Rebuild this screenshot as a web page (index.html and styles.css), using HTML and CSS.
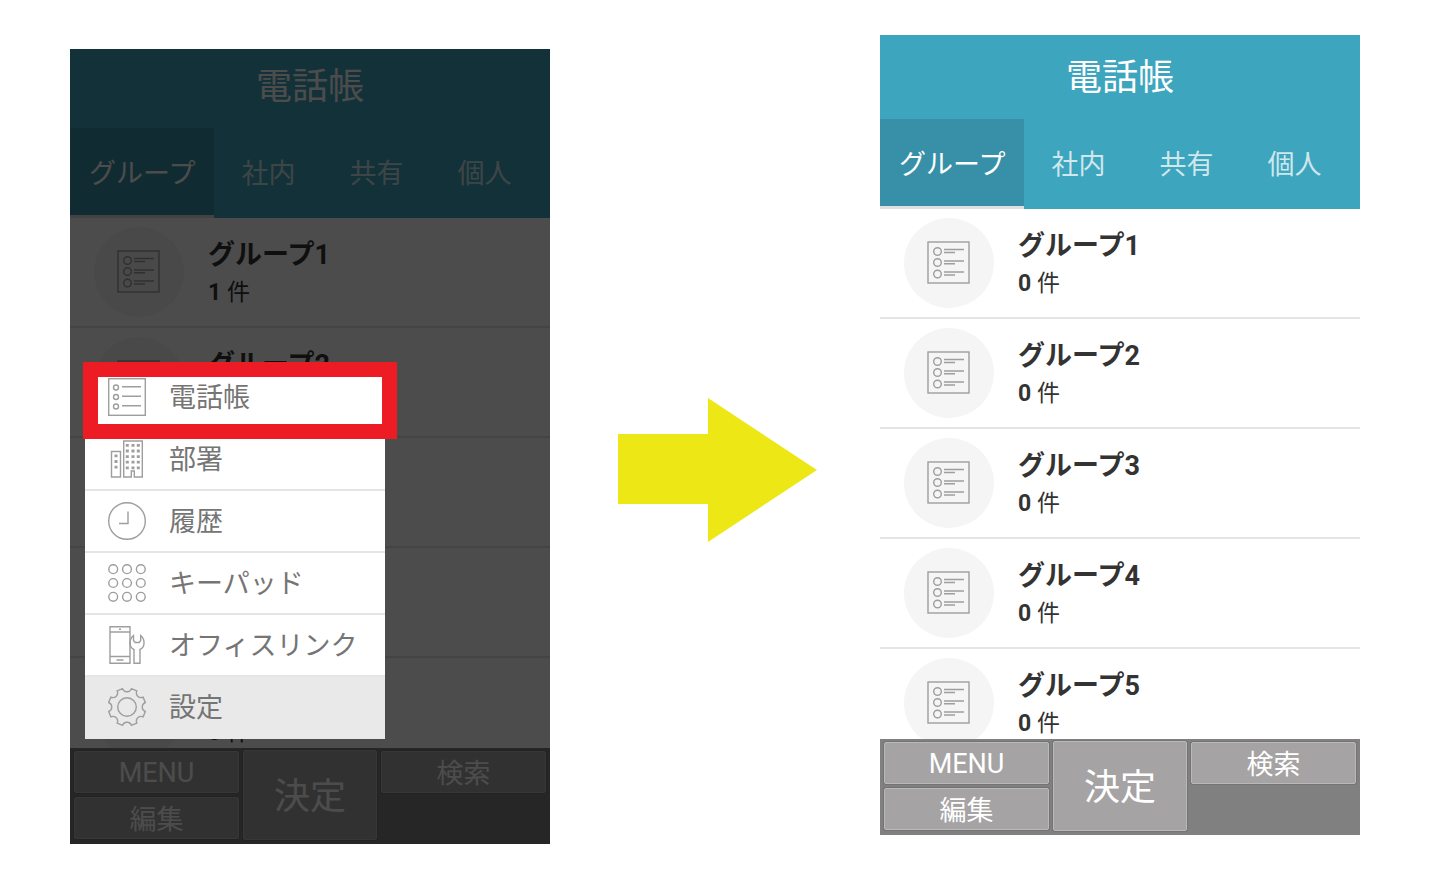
FILE: index.html
```html
<!DOCTYPE html>
<html lang="ja">
<head>
  <meta charset="UTF-8">
  <meta name="viewport" content="width=device-width, initial-scale=1.0">
  <title>電話帳</title>
  <link rel="stylesheet" href="styles.css">
</head>
<body>
  <!-- アイコン定義 -->
  <svg class="icon-defs" aria-hidden="true">
    <symbol id="icon-group" viewBox="0 0 44 44">
      <rect x="1" y="1" width="41" height="41"/>
      <circle cx="10.500" cy="10.500" r="3.800"/>
      <circle cx="10.500" cy="21.500" r="3.800"/>
      <circle cx="10.500" cy="33" r="3.800"/>
      <path d="M17 8.500h20M17 11.500h11M17 20h20M17 22.700h11M17 31h20M17 34h11"/>
    </symbol>
    <symbol id="icon-book" viewBox="0 0 38 38">
      <rect x=".7" y=".7" width="36.6" height="36.6"/>
      <circle cx="8" cy="9.5" r="2.5"/>
      <circle cx="8" cy="19" r="2.5"/>
      <circle cx="8" cy="28.5" r="2.5"/>
      <path d="M14 8.7h19M14 18.2h19M14 27.7h19"/>
    </symbol>
    <symbol id="icon-building" viewBox="0 0 38 38">
      <path d="M3.5 11.5h9v25.5h-9zM15.7 1h18.600v36h-8v-6h-3v6h-7.600z"/>
      <path class="windows" d="M8 14.500v14.500M19.300 4v25.500M25 4v25.500M30.300 4v25.500"/>
    </symbol>
    <symbol id="icon-clock" viewBox="0 0 38 38">
      <circle cx="19" cy="19" r="18.300"/>
      <path d="M20 9.500v12h-9"/>
    </symbol>
    <symbol id="icon-keypad" viewBox="0 0 38 38">
      <circle cx="5.200" cy="5.200" r="4.400"/>
      <circle cx="19" cy="5.200" r="4.400"/>
      <circle cx="32.800" cy="5.200" r="4.400"/>
      <circle cx="5.200" cy="19" r="4.400"/>
      <circle cx="19" cy="19" r="4.400"/>
      <circle cx="32.800" cy="19" r="4.400"/>
      <circle cx="5.200" cy="32.800" r="4.400"/>
      <circle cx="19" cy="32.800" r="4.400"/>
      <circle cx="32.800" cy="32.800" r="4.400"/>
    </symbol>
    <symbol id="icon-office" viewBox="0 0 38 38">
      <path d="M2 .8h20v36.400H2zM2 6h20M2 30.500h20M8.500 34h7M11 3.300h2"/>
      <path d="M26 37.200V23.500C21 21.500 20.500 13.500 25.500 9.500V14.500l1.600 2h4l1.600-2V9.500C37.500 13.500 37 21.500 32 23.500V37.200z"/>
    </symbol>
    <symbol id="icon-gear" viewBox="-19 -19 38 38">
      <circle r="9.300"/>
      <path d="M-4.500-18.300C-3-15-1.500-15.300 0-15.300S3-15 4.500-18.300L9.800-16.100C8.500-12.700 9.800-11.800 10.800-10.800S12.700-8.500 16.100-9.800L18.300-4.500C15-3 15.300-1.500 15.300 0S15 3 18.300 4.500L16.100 9.800C12.700 8.500 11.800 9.800 10.800 10.800S8.500 12.700 9.800 16.100L4.500 18.300C3 15 1.500 15.300 0 15.300S-3 15-4.500 18.300L-9.800 16.100C-8.500 12.700-9.800 11.800-10.800 10.800S-12.700 8.500-16.100 9.800L-18.300 4.500C-15 3-15.300 1.500-15.300 0S-15-3-18.300-4.500L-16.100-9.800C-12.700-8.500-11.800-9.800-10.800-10.800S-8.500-12.700-9.800-16.100Z"/>
    </symbol>
  </svg>

  <main class="guide">
    <!-- メニューを開いた画面 -->
    <section class="phone phone-before">
      <header class="phone-header"><h1>電話帳</h1></header>
      <nav class="tabs">
        <button class="tab active">グループ</button>
        <button class="tab">社内</button>
        <button class="tab">共有</button>
        <button class="tab">個人</button>
      </nav>
      <ul class="group-list">
        <li class="group">
          <span class="avatar"><svg><use href="#icon-group"/></svg></span>
          <div class="group-text"><h2>グループ1</h2><p><b>1</b> 件</p></div>
        </li>
        <li class="group">
          <span class="avatar"><svg><use href="#icon-group"/></svg></span>
          <div class="group-text"><h2>グループ2</h2><p class="covered"><b>0</b> 件</p></div>
        </li>
        <li class="group">
          <span class="avatar"><svg><use href="#icon-group"/></svg></span>
          <div class="group-text covered"><h2>グループ3</h2><p><b>0</b> 件</p></div>
        </li>
        <li class="group">
          <span class="avatar"><svg><use href="#icon-group"/></svg></span>
          <div class="group-text covered"><h2>グループ4</h2><p><b>0</b> 件</p></div>
        </li>
        <li class="group">
          <span class="avatar"><svg><use href="#icon-group"/></svg></span>
          <div class="group-text"><h2 class="covered">グループ5</h2><p><b>0</b> 件</p></div>
        </li>
      </ul>
      <footer class="keys">
        <button class="key key-menu">MENU</button>
        <button class="key key-enter">決定</button>
        <button class="key">検索</button>
        <button class="key">編集</button>
      </footer>

      <div class="dim"></div>
      <nav class="menu">
        <button class="menu-item"><svg><use href="#icon-book"/></svg><span>電話帳</span></button>
        <button class="menu-item"><svg><use href="#icon-building"/></svg><span>部署</span></button>
        <button class="menu-item"><svg><use href="#icon-clock"/></svg><span>履歴</span></button>
        <button class="menu-item"><svg><use href="#icon-keypad"/></svg><span>キーパッド</span></button>
        <button class="menu-item"><svg><use href="#icon-office"/></svg><span>オフィスリンク</span></button>
        <button class="menu-item selected"><svg><use href="#icon-gear"/></svg><span>設定</span></button>
      </nav>
      <div class="highlight"></div>
    </section>

    <div class="arrow">
      <svg viewBox="0 0 199 144"><path d="M0 36h90V0l109 72-109 72v-38H0z"/></svg>
    </div>

    <!-- 電話帳画面 -->
    <section class="phone">
      <header class="phone-header"><h1>電話帳</h1></header>
      <nav class="tabs">
        <button class="tab active">グループ</button>
        <button class="tab">社内</button>
        <button class="tab">共有</button>
        <button class="tab">個人</button>
      </nav>
      <ul class="group-list">
        <li class="group">
          <span class="avatar"><svg><use href="#icon-group"/></svg></span>
          <div class="group-text"><h2>グループ1</h2><p><b>0</b> 件</p></div>
        </li>
        <li class="group">
          <span class="avatar"><svg><use href="#icon-group"/></svg></span>
          <div class="group-text"><h2>グループ2</h2><p><b>0</b> 件</p></div>
        </li>
        <li class="group">
          <span class="avatar"><svg><use href="#icon-group"/></svg></span>
          <div class="group-text"><h2>グループ3</h2><p><b>0</b> 件</p></div>
        </li>
        <li class="group">
          <span class="avatar"><svg><use href="#icon-group"/></svg></span>
          <div class="group-text"><h2>グループ4</h2><p><b>0</b> 件</p></div>
        </li>
        <li class="group">
          <span class="avatar"><svg><use href="#icon-group"/></svg></span>
          <div class="group-text"><h2>グループ5</h2><p><b>0</b> 件</p></div>
        </li>
      </ul>
      <footer class="keys">
        <button class="key key-menu">MENU</button>
        <button class="key key-enter">決定</button>
        <button class="key">検索</button>
        <button class="key">編集</button>
      </footer>
    </section>
  </main>
</body>
</html>
```

FILE: styles.css
```css
* {
  margin: 0;
  padding: 0;
  box-sizing: border-box;
}
body {
  font-family: Roboto, "Noto Sans CJK JP", sans-serif;
  background: #fff;
  color: #333;
}
button {
  font: inherit;
  border: none;
  cursor: pointer;
}
.icon-defs {
  position: absolute;
  width: 0;
  height: 0;
}
/* 2つの画面と矢印 */
.guide {
  display: grid;
  grid-template-columns: 16fr 11fr 16fr;
  align-items: start;
  padding: 35px 71px 28px 70px;
}
.phone {
  position: relative;
}
.phone-before {
  margin-top: 14px;
}
.phone-header {
  height: 84px;
  display: flex;
  align-items: flex-end;
  justify-content: center;
  background: #3ea5be;
  color: #fff;
}
.phone-before .phone-header {
  height: 79px;
}
.phone-header h1 {
  font-size: 36px;
  font-weight: 400;
  line-height: 82px;
}
/* タブ */
.tabs {
  display: flex;
  background: #3ea5be;
}
.tab {
  min-width: 108px;
  height: 90px;
  padding: 0 19px 4px;
  background: none;
  color: rgba(255, 255, 255, 0.75);
  font-size: 27px;
}
.tab.active {
  background: #3790a8;
  color: #fff;
  box-shadow: inset 0 -3px #dfdfdf;
}
/* グループ一覧 */
.group-list {
  height: 530px;
  overflow: hidden;
  list-style: none;
  background: #fff;
}
.group {
  display: flex;
  align-items: center;
  gap: 24px;
  height: 110px;
  padding: 0 24px;
  border-bottom: 2px solid #e5e5e5;
}
.avatar {
  display: flex;
  align-items: center;
  justify-content: center;
  width: 90px;
  height: 90px;
  border-radius: 50%;
  background: #f5f5f5;
}
.avatar svg {
  width: 44px;
  height: 44px;
  fill: none;
  stroke: #9e9e9e;
  stroke-width: 1.4;
}
.group-text {
  padding-top: 3px;
}
.group-text h2 {
  font-size: 27px;
  font-weight: 700;
  line-height: 38px;
}
.group-text p {
  font-size: 23px;
  line-height: 38px;
}
/* メニューの下に隠れる文字 */
.covered {
  visibility: hidden;
}
/* 下部キー */
.keys {
  display: grid;
  grid-template-columns: 165fr 134fr 165fr;
  grid-template-rows: 44px 44px;
  gap: 2px 4px;
  padding: 2px 4px 4px;
  background: #808080;
}
.key {
  margin: 1px 0;
  padding-bottom: 4px;
  border: 1px solid #b9b9b9;
  border-radius: 2px;
  box-shadow: 0 0 0 1px #747474;
  background: #a5a3a4;
  color: #fff;
  font-size: 27px;
}
.key-menu {
  padding: 2px 0 0;
}
.key-enter {
  grid-row: span 2;
  margin: 0;
  font-size: 36px;
}
/* メニュー */
.dim {
  position: absolute;
  inset: 0;
  background: rgba(0, 0, 0, 0.7);
}
.menu {
  position: absolute;
  top: 318px;
  left: 15px;
  width: 300px;
}
.menu-item {
  display: flex;
  align-items: center;
  gap: 23px;
  width: 100%;
  height: 62px;
  padding: 0 23px;
  border-bottom: 2px solid #e5e5e5;
  background: #fff;
  color: #757575;
  font-size: 27px;
}
.menu-item.selected {
  background: #e9e9e9;
  border-color: #e9e9e9;
}
.menu-item span {
  padding-bottom: 4px;
}
.menu-item svg {
  flex: none;
  width: 38px;
  height: 38px;
  fill: none;
  stroke: #9e9e9e;
  stroke-width: 1.4;
}
.windows {
  stroke-width: 3;
  stroke-dasharray: 2.800 2.800;
}
/* 赤枠 */
.highlight {
  position: absolute;
  top: 313px;
  left: 13px;
  width: 314px;
  height: 77px;
  border: 15px solid #ed1c24;
  pointer-events: none;
}
.arrow {
  align-self: center;
  justify-self: center;
  padding: 61px 0 0 5px;
}
.arrow svg {
  display: block;
  width: 199px;
  fill: #ede815;
}
```
